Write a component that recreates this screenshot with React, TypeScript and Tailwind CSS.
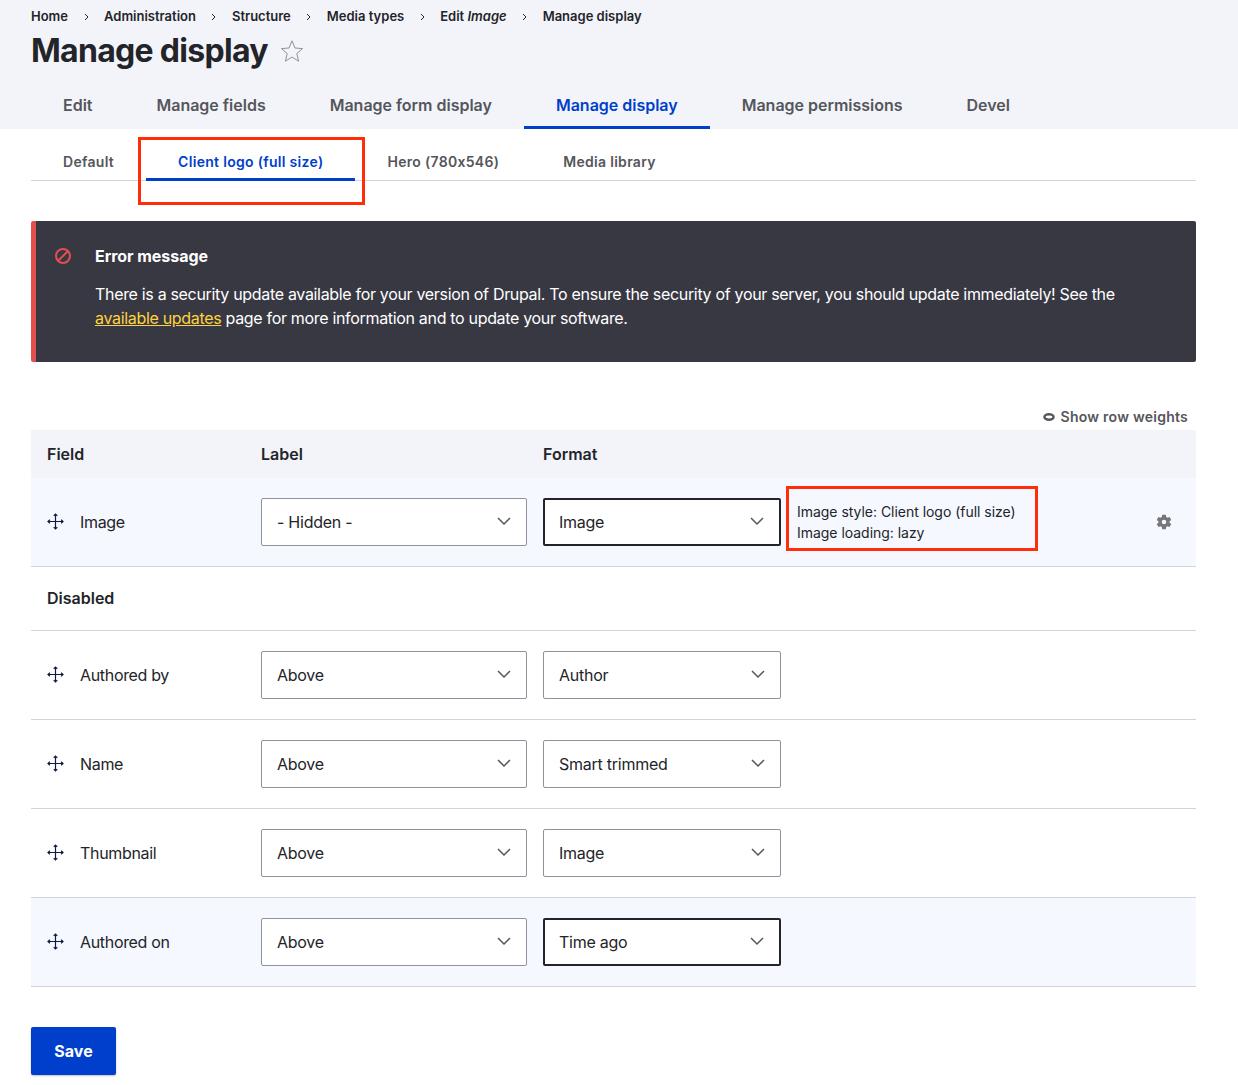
const PRIMARY_TABS = [
  { label: "Edit" },
  { label: "Manage fields" },
  { label: "Manage form display" },
  { label: "Manage display", active: true },
  { label: "Manage permissions" },
  { label: "Devel" },
];

const SECONDARY_TABS = [
  { label: "Default" },
  { label: "Client logo (full size)", active: true },
  { label: "Hero (780x546)" },
  { label: "Media library" },
];

const DISABLED_ROWS = [
  { name: "Authored by", label: "Above", format: "Author" },
  { name: "Name", label: "Above", format: "Smart trimmed" },
  { name: "Thumbnail", label: "Above", format: "Image" },
  { name: "Authored on", label: "Above", format: "Time ago", highlight: true },
];

function Chevron() {
  return (
    <svg className="mb-[2px]" width="14" height="9" viewBox="0 0 14 9" fill="none" stroke="#55565b" strokeWidth="1.5">
      <path d="M1 1l6 6 6-6" />
    </svg>
  );
}

function Crumb({ children, last = false }: { children: React.ReactNode; last?: boolean }) {
  return (
    <>
      <span>{children}</span>
      {!last && (
        <svg className="mx-[15.500px]" width="5" height="8" viewBox="0 0 5 8" fill="none" stroke="#23232b" strokeWidth="1">
          <path d="M1 1l3 3-3 3" />
        </svg>
      )}
    </>
  );
}

function Select({ value, width, focused }: { value: string; width: string; focused?: boolean }) {
  return (
    <div
      className={`flex h-12 items-center justify-between rounded-[2px] bg-white pr-[15px] text-base tracking-[-0.25px] text-[#232429] ${width} ${
        focused ? "border-2 border-[#232429] pl-[14px]" : "border border-[#8e929c] pl-[15px]"
      }`}
    >
      <span>{value}</span>
      <Chevron />
    </div>
  );
}

function DragHandle() {
  return (
    <svg width="18" height="18" viewBox="0 0 18 18" fill="none" stroke="#0f1a3c" strokeWidth="1.2" className="shrink-0">
      <path d="M8.500 1v15M1 8.500h15" />
      <path d="M6.700 2.900L8.500 1l1.800 1.900M6.700 14.100l1.800 1.900 1.800-1.900M2.900 6.700L1 8.500l1.900 1.800M14.100 6.700L16 8.500l-1.900 1.800" />
    </svg>
  );
}

function FieldName({ name }: { name: string }) {
  return (
    <div className="flex w-[214px] shrink-0 items-center gap-[15px] pl-[16px] text-base tracking-[-0.33px] text-[#232429]">
      <DragHandle />
      <span>{name}</span>
    </div>
  );
}

function Gear() {
  return (
    <svg width="18" height="18" viewBox="0 0 24 24" fill="#75767b">
      <path d="M19.400 13a7.600 7.600 0 0 0 0-2l2.300-1.800-2.300-4-2.800 1.100a7.500 7.500 0 0 0-1.700-1L14.400 2.300H9.600L9.100 5.300a7.500 7.500 0 0 0-1.700 1L4.600 5.200l-2.300 4L4.600 11a7.600 7.600 0 0 0 0 2l-2.300 1.800 2.300 4 2.800-1.100a7.500 7.500 0 0 0 1.700 1l.5 3h4.800l.5-3a7.500 7.500 0 0 0 1.700-1l2.800 1.100 2.300-4zM12 15a3 3 0 1 1 0-6 3 3 0 0 1 0 6z" />
    </svg>
  );
}

export default function App() {
  return (
    <div className="relative min-h-[1085px] bg-white font-['Inter',sans-serif] text-[#232429] [font-variant-ligatures:no-contextual]">
      {/* Page header */}
      <header className="h-[129px] bg-[#f3f4f9] px-[31px]">
        <nav className="flex h-[34px] items-center text-[13px] font-semibold">
          <Crumb>Home</Crumb>
          <Crumb>Administration</Crumb>
          <Crumb>Structure</Crumb>
          <Crumb>Media types</Crumb>
          <Crumb>
            Edit <em>Image</em>
          </Crumb>
          <Crumb last>Manage display</Crumb>
        </nav>
        <div className="flex h-[33px] items-center gap-[12.500px]">
          <h1 className="text-[32px] font-bold tracking-[-0.7px]">Manage display</h1>
          <svg width="24" height="24" viewBox="0 0 24 24" fill="none" stroke="#8e929c" strokeWidth="1">
            <path d="M12 1.800l3 7.200 7.500.6-5.700 5 1.800 7.600L12 18.100l-6.600 4.100 1.800-7.600-5.700-5L9 9z" />
          </svg>
        </div>
        <div className="mt-[15px] flex h-[47px]">
          {PRIMARY_TABS.map((tab) => (
            <a
              key={tab.label}
              className={`flex items-center border-b-[3px] px-[32px] pt-[1px] text-base font-semibold tracking-[-0.01px] ${
                tab.active ? "border-[#003ecc] text-[#003ecc]" : "border-transparent text-[#55565b]"
              }`}
            >
              {tab.label}
            </a>
          ))}
        </div>
      </header>

      <main className="px-[31px] pr-[42px]">
        <div className="flex h-[52px] border-b border-[#d3d4d9]">
          {SECONDARY_TABS.map((tab) => (
            <a
              key={tab.label}
              className={`-mb-px flex h-[52px] items-center border-b-[3px] px-[32px] pt-[17px] text-sm font-semibold tracking-[0.3px] ${
                tab.active ? "border-[#003ecc] text-[#003ecc]" : "border-transparent text-[#55565b]"
              }`}
            >
              {tab.label}
            </a>
          ))}
        </div>

        {/* Status message */}
        <div className="mt-[40px] flex h-[141px] rounded-[2px] border-l-[5px] border-[#e34f4f] bg-[#383843] pl-[19px] pt-[23px] text-white">
          <svg className="mt-[4px] shrink-0" width="16" height="16" viewBox="0 0 16 16" fill="none" stroke="#e34f4f" strokeWidth="2">
            <circle cx="8" cy="8" r="7" />
            <path d="M3.200 12.800L12.800 3.200" />
          </svg>
          <div className="ml-[24px]">
            <div className="text-base font-bold leading-6 tracking-[-0.05px]">Error message</div>
            <p className="mt-[14px] text-base leading-6 tracking-[-0.32px]">
              There is a security update available for your version of Drupal. To ensure the security of your server, you should update immediately! See the
              <br />
              <a className="text-[#ffd23f] underline">available updates</a> page for more information and to update your software.
            </p>
          </div>
        </div>

        <div className="mt-[43px] flex h-[23px] items-center justify-end gap-[6px] pr-2 text-sm font-semibold tracking-[0.25px] text-[#55565b]">
          <svg width="12" height="8" viewBox="0 0 12 8" fill="none" stroke="#55565b" strokeWidth="2.500">
            <ellipse cx="6" cy="4" rx="4.500" ry="2.700" />
          </svg>
          Show row weights
        </div>

        {/* Field table */}
        <div className="mt-[2px]">
          <div className="flex h-12 items-center bg-[#f3f4f9] text-base font-semibold">
            <div className="w-[214px] pl-[16px]">Field</div>
            <div className="w-[282px] pl-[16px]">Label</div>
            <div className="pl-[16px]">Format</div>
          </div>

          <div className="flex h-[89px] items-center border-b border-[#d3d4d9] bg-[#f5f8fe]">
            <FieldName name="Image" />
            <div className="w-[282px] shrink-0 pl-[16px]">
              <Select value="- Hidden -" width="w-[266px]" />
            </div>
            <div className="shrink-0 pl-[16px]">
              <Select value="Image" width="w-[238px]" focused />
            </div>
            <div className="ml-[16px] text-sm leading-[21px] tracking-[-0.03px]">
              <div>Image style: Client logo (full size)</div>
              <div>Image loading: lazy</div>
            </div>
            <div className="ml-auto pr-[23px]">
              <Gear />
            </div>
          </div>

          <div className="flex h-[64px] items-center border-b border-[#d3d4d9] pb-[2px] pl-[16px] text-base font-semibold">
            Disabled
          </div>

          {DISABLED_ROWS.map((row) => (
            <div
              key={row.name}
              className={`flex h-[89px] items-center border-b border-[#d3d4d9] ${row.highlight ? "bg-[#f5f8fe]" : ""}`}
            >
              <FieldName name={row.name} />
              <div className="w-[282px] shrink-0 pl-[16px]">
                <Select value={row.label} width="w-[266px]" />
              </div>
              <div className="shrink-0 pl-[16px]">
                <Select value={row.format} width="w-[238px]" focused={row.highlight} />
              </div>
            </div>
          ))}
        </div>

        <button className="mt-[40px] h-12 w-[85px] rounded-[2px] bg-[#003ecc] text-base font-bold text-white shadow-[0_1px_2px_rgba(0,0,0,0.25)]">
          Save
        </button>
      </main>

      {/* Annotation boxes drawn over the screenshot */}
      <div className="absolute left-[138px] top-[137px] h-[68px] w-[227px] border-[3px] border-[#ff2d0a]" />
      <div className="absolute left-[786px] top-[486px] h-[65px] w-[252px] border-[3px] border-[#ff2d0a]" />
    </div>
  );
}
